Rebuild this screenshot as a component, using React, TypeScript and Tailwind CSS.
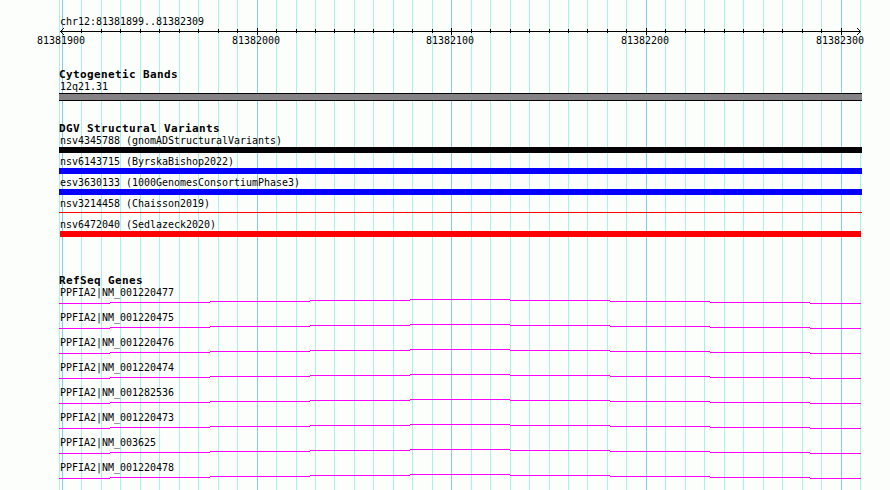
import React from 'react';

type Variant = { label: string; bar: string };

const MAJOR = [62, 257, 451, 646, 841];
const MINOR = [
  59, 81, 101, 120, 140, 159, 179, 198, 218, 237, 276, 296, 315, 334, 354, 373, 393, 412, 432, 471,
  490, 510, 529, 549, 568, 587, 607, 626, 665, 685, 704, 724, 743, 763, 782, 802, 821, 860,
];

const TICK_LABELS = ['81381900', '81382000', '81382100', '81382200', '81382300'];

const VARIANTS: Variant[] = [
  { label: 'nsv4345788 (gnomADStructuralVariants)', bar: 'h-1.5 w-[803px] bg-[#040204]' },
  { label: 'nsv6143715 (ByrskaBishop2022)', bar: 'h-1.5 w-[803px] bg-[#0400fc]' },
  { label: 'esv3630133 (1000GenomesConsortiumPhase3)', bar: 'h-1.5 w-[803px] bg-[#0400fc]' },
  { label: 'nsv3214458 (Chaisson2019)', bar: 'mt-0.5 h-px w-[803px] bg-[#fc0204]' },
  { label: 'nsv6472040 (Sedlazeck2020)', bar: 'ml-px h-1.5 w-[801px] bg-[#fc0204]' },
];

const GENES = [
  'NM_001220477',
  'NM_001220475',
  'NM_001220476',
  'NM_001220474',
  'NM_001282536',
  'NM_001220473',
  'NM_003625',
  'NM_001220478',
];

const Label: React.FC<{ children: React.ReactNode }> = ({ children }) => (
  <div className="ml-px h-3 w-max origin-left scale-x-[0.906] whitespace-pre font-['DejaVu_Sans_Mono',monospace] text-[11px] leading-[14px] text-black">
    {children}
  </div>
);

const Title: React.FC<{ children: React.ReactNode }> = ({ children }) => (
  <h2 className="h-3 whitespace-pre font-['DejaVu_Sans_Mono',monospace] text-[11px] leading-[14px] font-bold tracking-[0.378px] text-black">
    {children}
  </h2>
);

const GridLines = () => (
  <svg className="absolute inset-0" width="890" height="490" shapeRendering="crispEdges">
    {MINOR.map((x) => (
      <rect key={x} x={x} y="0" width="1" height="490" fill="#acf0ec" />
    ))}
    {MAJOR.map((x) => (
      <rect key={x} x={x} y="0" width="1" height="490" fill="#84cce8" />
    ))}
  </svg>
);

const Axis = () => (
  <svg className="block" width="831" height="8" viewBox="59 28 831 8" shapeRendering="crispEdges">
    <rect x="60" y="31" width="801" height="1" />
    {MINOR.slice(1, -1).map((x) => (
      <rect key={x} x={x} y="29" width="1" height="4" />
    ))}
    {MAJOR.slice(1).map((x) => (
      <rect key={x} x={x} y="28" width="1" height="7" />
    ))}
    <path d="M61 30h1v1h-1zM62 29h1v1h-1zM63 28h1v1h-1zM61 32h1v1h-1zM62 33h1v1h-1zM63 34h1v1h-1z" />
    <path d="M859 30h1v1h-1zM858 29h1v1h-1zM857 28h1v1h-1zM859 32h1v1h-1zM858 33h1v1h-1zM857 34h1v1h-1z" />
  </svg>
);

const Intron = () => (
  <svg className="mt-px block" width="802" height="5" viewBox="0 0 802 5" shapeRendering="crispEdges" fill="#fc02fc">
    <path d="M0 4h51v1h-51zM51 3h100v1h-100zM151 2h100v1h-100zM251 1h100v1h-100zM351 0h100v1h-100z" />
    <path d="M451 1h100v1h-100zM551 2h100v1h-100zM651 3h100v1h-100zM751 4h51v1h-51z" />
  </svg>
);

const App = () => (
  <div className="relative h-[490px] w-[890px] overflow-hidden bg-[#fcfefc]">
    <GridLines />
    <main className="relative flex flex-col pt-[15px] pl-[59px]">
      <header>
        <Label>chr12:81381899..81382309</Label>
        <div className="mt-px">
          <Axis />
        </div>
        <div className="-mt-0.5 mb-0.5 -ml-[23px] flex h-3">
          {TICK_LABELS.map((label, i) => (
            <div key={label} className={i === 1 ? 'w-[194px] shrink-0' : 'w-[195px] shrink-0'}>
              <Label>{label}</Label>
            </div>
          ))}
        </div>
      </header>

      <section className="mt-5">
        <Title>Cytogenetic Bands</Title>
        <Label>12q21.31</Label>
        <div className="mt-px h-2 w-[803px] border-y border-[#040204] bg-[#848284]" />
      </section>

      <section className="mt-[21px]">
        <Title>DGV Structural Variants</Title>
        {VARIANTS.map(({ label, bar }) => (
          <div key={label} className="flex h-[21px] flex-col gap-px">
            <Label>{label}</Label>
            <div className={bar} />
          </div>
        ))}
      </section>

      <section className="mt-[35px]">
        <Title>RefSeq Genes</Title>
        {GENES.map((gene) => (
          <div key={gene} className="h-[25px]">
            <Label>PPFIA2|{gene}</Label>
            <Intron />
          </div>
        ))}
      </section>
    </main>
  </div>
);

export default App;
